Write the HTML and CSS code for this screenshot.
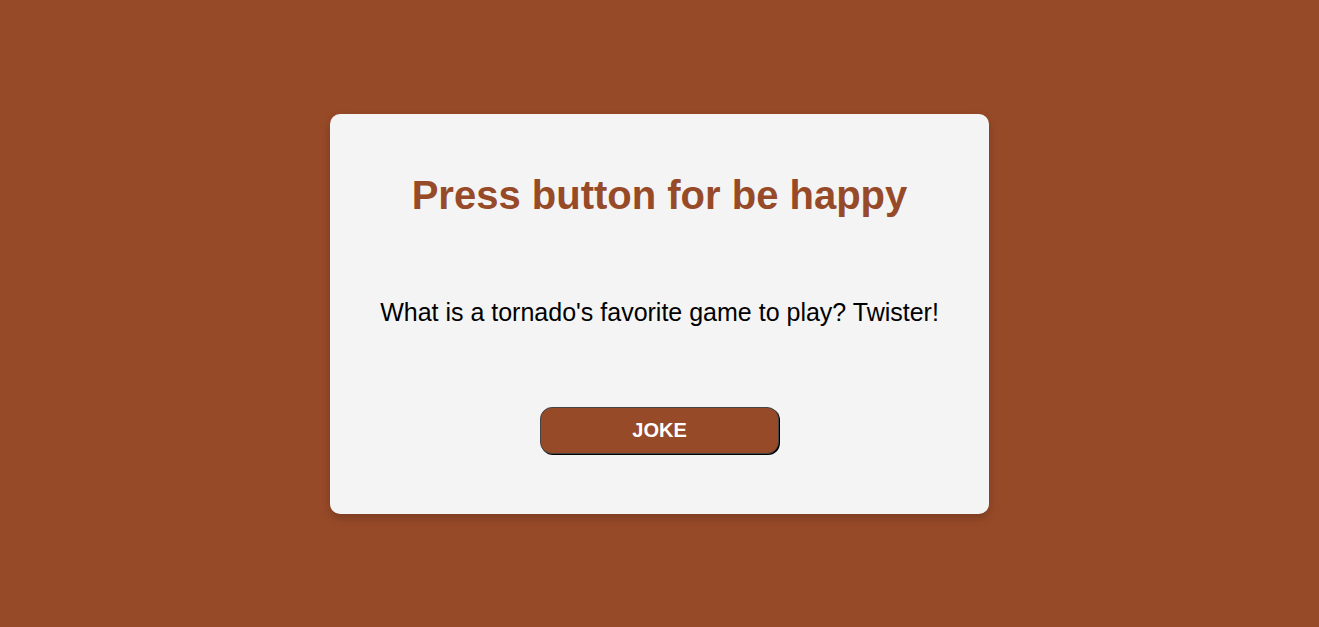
FILE: index.html
```html
<!DOCTYPE html>
<html>
<head>
<meta charset="utf-8">
<link rel="stylesheet" href="styles.css">
</head>
<body>
<div class="card">
  <h1 class="title">Press button for be happy</h1>
  <p class="joke">What is a tornado's favorite game to play? Twister!</p>
  <button class="btn">JOKE</button>
</div>
</body>
</html>
```
FILE: styles.css
```css
html, body {
  margin: 0;
  height: 100%;
}
body {
  background: #974a28;
  font-family: "Liberation Sans", Arial, sans-serif;
  display: flex;
  align-items: center;
  justify-content: center;
}
.card {
  box-sizing: border-box;
  width: 659px;
  height: 400px;
  background: #f4f4f4;
  border-radius: 10px;
  box-shadow: 0 4px 10px rgba(0, 0, 0, 0.2);
  display: flex;
  flex-direction: column;
  align-items: center;
  padding-top: 57px;
}
.title {
  margin: 0;
  font-size: 40px;
  line-height: 48px;
  color: #974a28;
  font-weight: bold;
}
.joke {
  margin: 79px 0 0;
  font-size: 25px;
  line-height: 29px;
  color: #000;
}
.btn {
  margin-top: 80px;
  width: 239px;
  height: 47px;
  background: #974a28;
  color: #fff;
  font-family: "Liberation Sans", Arial, sans-serif;
  font-size: 20px;
  font-weight: bold;
  border: 1px solid #444;
  border-radius: 12px;
  box-shadow: 1px 1px 0 #000;
}
```
